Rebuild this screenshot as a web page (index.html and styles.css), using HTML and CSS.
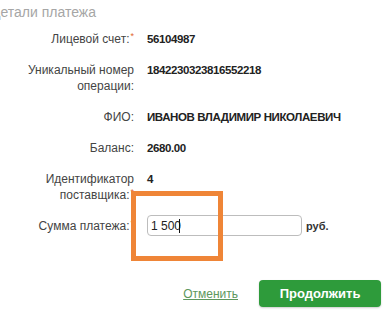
FILE: index.html
```html
<!DOCTYPE html>
<html lang="ru">
<head>
  <meta charset="UTF-8" />
  <meta name="viewport" content="width=device-width, initial-scale=1.0"/>
  <title>Детали платежа</title>
  <link rel="stylesheet" href="styles.css">
</head>
<body>

  <div class="payment">
    <h2 class="payment-title">Детали платежа</h2>

    <div class="details">
      <div class="label">Лицевой счет:<span class="req">*</span></div>
      <div class="value">56104987</div>

      <div class="label">Уникальный номер<br>операции:</div>
      <div class="value">1842230323816552218</div>

      <div class="label">ФИО:</div>
      <div class="value">ИВАНОВ ВЛАДИМИР НИКОЛАЕВИЧ</div>

      <div class="label">Баланс:</div>
      <div class="value">2680.00</div>

      <div class="label">Идентификатор<br>поставщика:<span class="req">*</span></div>
      <div class="value">4</div>

      <div class="label label-input">Сумма платежа:<span class="req">*</span></div>
      <div class="value amount">
        <div class="amount-field">
          <input type="text" class="amount-input" value="1 500"><span class="caret"></span>
        </div>
        <span class="currency">руб.</span>
        <!-- annotation frame from the screenshot -->
        <div class="highlight"></div>
      </div>
    </div>

    <div class="actions">
      <a href="#" class="cancel">Отменить</a>
      <button type="button" class="next">Продолжить</button>
    </div>
  </div>

</body>
</html>
```

FILE: styles.css
```css
* {
  box-sizing: border-box;
  font-family: 'Liberation Sans', Arial, sans-serif;
}

body {
  margin: 0;
  padding: 0;
  background: #fff;
  overflow: hidden;
}

.payment {
  width: 391px;
  height: 320px;
}

.payment-title {
  margin: 3px 0 0 -9px;
  font-size: 14px;
  font-weight: normal;
  line-height: 18px;
  color: #a6a6a6;
}

.details {
  display: grid;
  grid-template-columns: 134px auto;
  column-gap: 13px;
  row-gap: 15px;
  margin-top: 10px;
  font-size: 12px;
  line-height: 16px;
}

.label {
  text-align: right;
  color: #444;
}

.req {
  color: #e2662e;
  font-size: 9px;
  vertical-align: top;
  line-height: 10px;
  margin-left: 1px;
}

.value {
  font-weight: bold;
  font-size: 11.5px;
  letter-spacing: -0.4px;
  color: #222;
}

.label-input {
  align-self: center;
  margin-top: -3px;
}

.amount {
  position: relative;
  display: flex;
  align-items: center;
  gap: 4px;
  margin-top: -3px;
}

.amount-field {
  position: relative;
  width: 155px;
  height: 21px;
}

.amount-input {
  width: 100%;
  height: 100%;
  margin: 0;
  padding: 0 3px;
  border: 1px solid #bdbdbd;
  border-radius: 4px;
  font-size: 12px;
  color: #222;
  background: #fff;
  outline: none;
}

.caret {
  position: absolute;
  left: 32px;
  top: 4px;
  width: 1px;
  height: 14px;
  background: #111;
}

.currency {
  font-size: 11px;
  letter-spacing: 0;
  color: #333;
}

.highlight {
  position: absolute;
  left: -16px;
  top: -24px;
  width: 92px;
  height: 70px;
  border: 5px solid #ef8537;
  pointer-events: none;
}

.actions {
  display: flex;
  justify-content: flex-end;
  align-items: center;
  gap: 21px;
  margin-top: 44px;
  padding-right: 10px;
}

.cancel {
  color: #5d975d;
  font-size: 12px;
  text-decoration: underline;
}

.next {
  width: 122px;
  height: 27px;
  border: none;
  border-radius: 4px;
  background-color: #2e9b3b;
  color: #fff;
  font-size: 13px;
  font-weight: bold;
  cursor: pointer;
  box-shadow: 0 1px 2px rgba(0, 0, 0, 0.2);
}
```
